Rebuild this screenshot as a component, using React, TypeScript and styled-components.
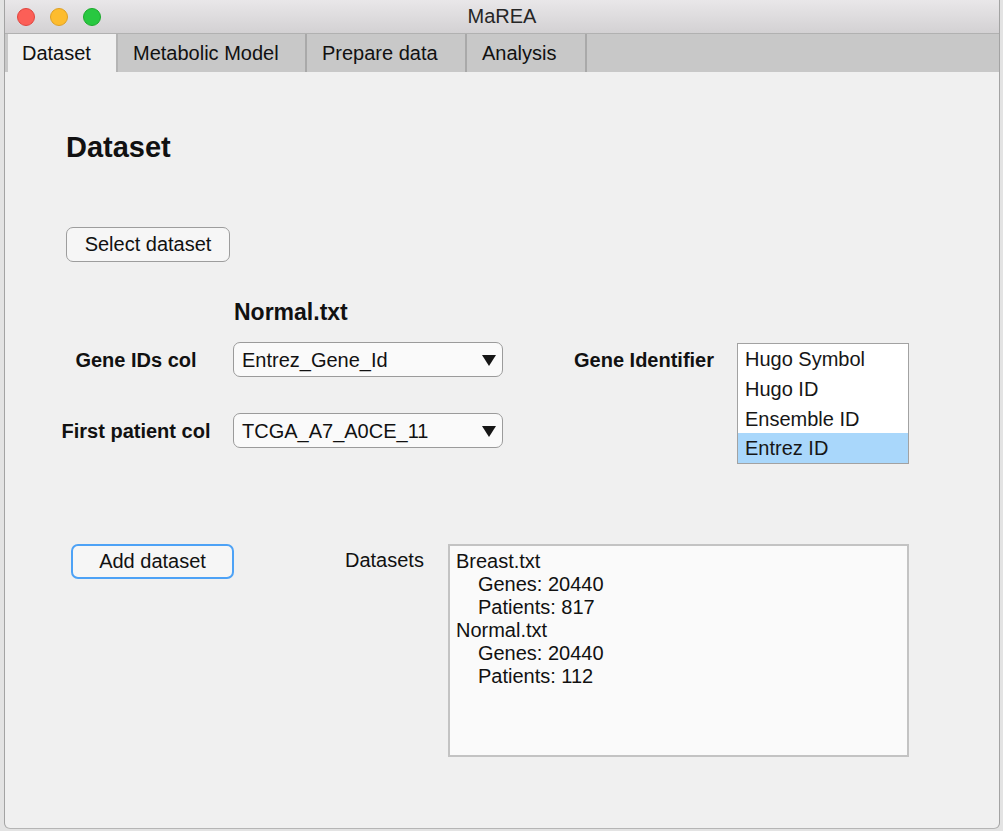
import styled, { createGlobalStyle } from 'styled-components';

const GlobalStyle = createGlobalStyle`
  html, body {
    margin: 0;
    padding: 0;
    height: 100%;
    overflow: hidden;
    background: #e3e3e3;
  }

  body {
    font-family: 'Liberation Sans', Arial, Helvetica, sans-serif;
    color: #111;
  }
`;

const tabs = [
  { label: 'Dataset', width: 110 },
  { label: 'Metabolic Model', width: 189 },
  { label: 'Prepare data', width: 160 },
  { label: 'Analysis', width: 120 },
];

const identifiers = ['Hugo Symbol', 'Hugo ID', 'Ensemble ID', 'Entrez ID'];

const summary = [
  { text: 'Breast.txt', indent: false },
  { text: 'Genes: 20440', indent: true },
  { text: 'Patients: 817', indent: true },
  { text: 'Normal.txt', indent: false },
  { text: 'Genes: 20440', indent: true },
  { text: 'Patients: 112', indent: true },
];

const DropArrow = () => (
  <svg width="14" height="11" viewBox="0 0 14 11">
    <polygon points="0,0 14,0 7,11" fill="#161616" />
  </svg>
);

const App = () => {
  return (
    <>
      <GlobalStyle />
      <Window>
        <TitleBar>
          <Lights>
            <Light $fill="#fc5f57" $ring="#e0453f" />
            <Light $fill="#fdbc2e" $ring="#dea024" />
            <Light $fill="#28c840" $ring="#1caa2c" />
          </Lights>
          <Title>MaREA</Title>
          <div />
        </TitleBar>

        <TabStrip>
          {tabs.map((t, i) => (
            <Tab key={t.label} $active={i === 0} $width={t.width}>
              {t.label}
            </Tab>
          ))}
        </TabStrip>

        <Content>
          <Heading>Dataset</Heading>
          <PushButton $width={164} $left={61}>
            Select dataset
          </PushButton>

          <MidSection>
            <FieldColumn>
              <FileName>Normal.txt</FileName>
              <FieldRow>
                <FieldLabel>Gene IDs col</FieldLabel>
                <SelectBox>
                  <span>Entrez_Gene_Id</span>
                  <DropArrow />
                </SelectBox>
              </FieldRow>
              <FieldRow>
                <FieldLabel>First patient col</FieldLabel>
                <SelectBox>
                  <span>TCGA_A7_A0CE_11</span>
                  <DropArrow />
                </SelectBox>
              </FieldRow>
            </FieldColumn>

            <IdentifierGroup>
              <GroupLabel>Gene Identifier</GroupLabel>
              <ListBox>
                {identifiers.map((id) => (
                  <ListItem key={id} $selected={id === 'Entrez ID'}>
                    {id}
                  </ListItem>
                ))}
              </ListBox>
            </IdentifierGroup>
          </MidSection>

          <BottomSection>
            <PushButton $width={163} $left={0} $focused>
              Add dataset
            </PushButton>
            <DatasetsLabel>Datasets</DatasetsLabel>
            <SummaryBox>
              {summary.map((line, i) => (
                <SummaryLine key={i} $indent={line.indent}>
                  {line.text}
                </SummaryLine>
              ))}
            </SummaryBox>
          </BottomSection>
        </Content>
      </Window>
    </>
  );
};

export default App;

const Window = styled.div`
  display: flex;
  flex-direction: column;
  width: 996px;
  height: 829px;
  margin-left: 4px;
  box-sizing: border-box;
  border-left: 1px solid #a3a3a3;
  border-right: 1px solid #a3a3a3;
  border-bottom: 1px solid #b5b5b5;
  border-radius: 0 0 6px 6px;
  overflow: hidden;
  background: #f0f0f0;
`;

const TitleBar = styled.div`
  display: grid;
  grid-template-columns: 1fr auto 1fr;
  align-items: center;
  height: 33px;
  flex-shrink: 0;
  background: linear-gradient(#e9e7e9, #d3d1d3);
  border-bottom: 1px solid #b1b1b1;
`;

const Lights = styled.div`
  display: flex;
  gap: 15px;
  padding-left: 12px;
`;

const Light = styled.span<{ $fill: string; $ring: string }>`
  width: 18px;
  height: 18px;
  border-radius: 50%;
  box-sizing: border-box;
  background: ${(p) => p.$fill};
  border: 1px solid ${(p) => p.$ring};
`;

const Title = styled.div`
  font-size: 20px;
  color: #262626;
  line-height: 33px;
`;

const TabStrip = styled.div`
  display: flex;
  height: 38px;
  flex-shrink: 0;
  padding-left: 3px;
  background: #c8c8c8;
`;

const Tab = styled.div<{ $active?: boolean; $width: number }>`
  width: ${(p) => p.$width}px;
  box-sizing: border-box;
  padding-left: ${(p) => (p.$active ? 14 : 15)}px;
  font-size: 20px;
  line-height: 39px;
  color: #111;
  background: ${(p) => (p.$active ? '#f0f0f0' : '#c8c8c8')};
  border-right: 2px solid ${(p) => (p.$active ? '#b4b4b4' : '#a9a9a9')};
`;

const Content = styled.div`
  flex: 1;
  display: flex;
  flex-direction: column;
  align-items: flex-start;
  padding-top: 57px;
`;

const Heading = styled.h1`
  margin: 0 0 62px 61px;
  font-size: 29px;
  line-height: 36px;
  font-weight: bold;
`;

const PushButton = styled.button<{ $width: number; $left: number; $focused?: boolean }>`
  width: ${(p) => p.$width}px;
  height: 35px;
  margin-left: ${(p) => p.$left}px;
  padding: 0;
  flex-shrink: 0;
  box-sizing: border-box;
  font-family: inherit;
  font-size: 20px;
  color: #111;
  background: #f6f6f6;
  border-radius: 7px;
  border: ${(p) => (p.$focused ? '2px solid #4da2f6' : '1px solid #9d9d9d')};
`;

const MidSection = styled.div`
  display: flex;
  align-items: flex-start;
  margin-top: 35px;
`;

const FieldColumn = styled.div`
  display: flex;
  flex-direction: column;
  gap: 36px;
  margin-left: 45px;
`;

const FileName = styled.div`
  padding-left: 184px;
  margin-bottom: -22px;
  font-size: 23px;
  font-weight: bold;
  line-height: 31px;
`;

const FieldRow = styled.div`
  display: flex;
  align-items: center;
  gap: 11px;
`;

const FieldLabel = styled.div`
  width: 172px;
  padding-top: 2px;
  text-align: center;
  font-size: 20px;
  font-weight: bold;
`;

const SelectBox = styled.div`
  display: flex;
  align-items: center;
  justify-content: space-between;
  width: 270px;
  height: 35px;
  box-sizing: border-box;
  padding: 1px 6px 0 8px;
  font-size: 20px;
  background: #fafafa;
  border: 1px solid #9b9b9b;
  border-radius: 7px;
`;

const IdentifierGroup = styled.div`
  display: flex;
  align-items: flex-start;
  margin: 45px 0 0 71px;
`;

const GroupLabel = styled.div`
  width: 163px;
  font-size: 20px;
  font-weight: bold;
  line-height: 37px;
`;

const ListBox = styled.div`
  display: flex;
  flex-direction: column;
  width: 172px;
  height: 121px;
  margin-top: 1px;
  box-sizing: border-box;
  background: #ffffff;
  border: 1px solid #a2a2a2;
`;

const ListItem = styled.div<{ $selected?: boolean }>`
  height: 29.75px;
  padding: 1px 0 0 7px;
  box-sizing: border-box;
  font-size: 20px;
  line-height: 29.75px;
  color: #161616;
  background: ${(p) => (p.$selected ? '#a9d7fb' : 'transparent')};
`;

const BottomSection = styled.div`
  display: flex;
  align-items: flex-start;
  margin: 80px 0 0 66px;
`;

const DatasetsLabel = styled.div`
  margin-left: 111px;
  font-size: 20px;
  line-height: 33px;
`;

const SummaryBox = styled.div`
  width: 461px;
  height: 213px;
  margin-left: 24px;
  box-sizing: border-box;
  padding: 4px 6px;
  background: #fafafa;
  border: 2px solid #c3c3c3;
`;

const SummaryLine = styled.div<{ $indent?: boolean }>`
  padding-left: ${(p) => (p.$indent ? 22 : 0)}px;
  font-size: 20px;
  line-height: 23px;
`;
